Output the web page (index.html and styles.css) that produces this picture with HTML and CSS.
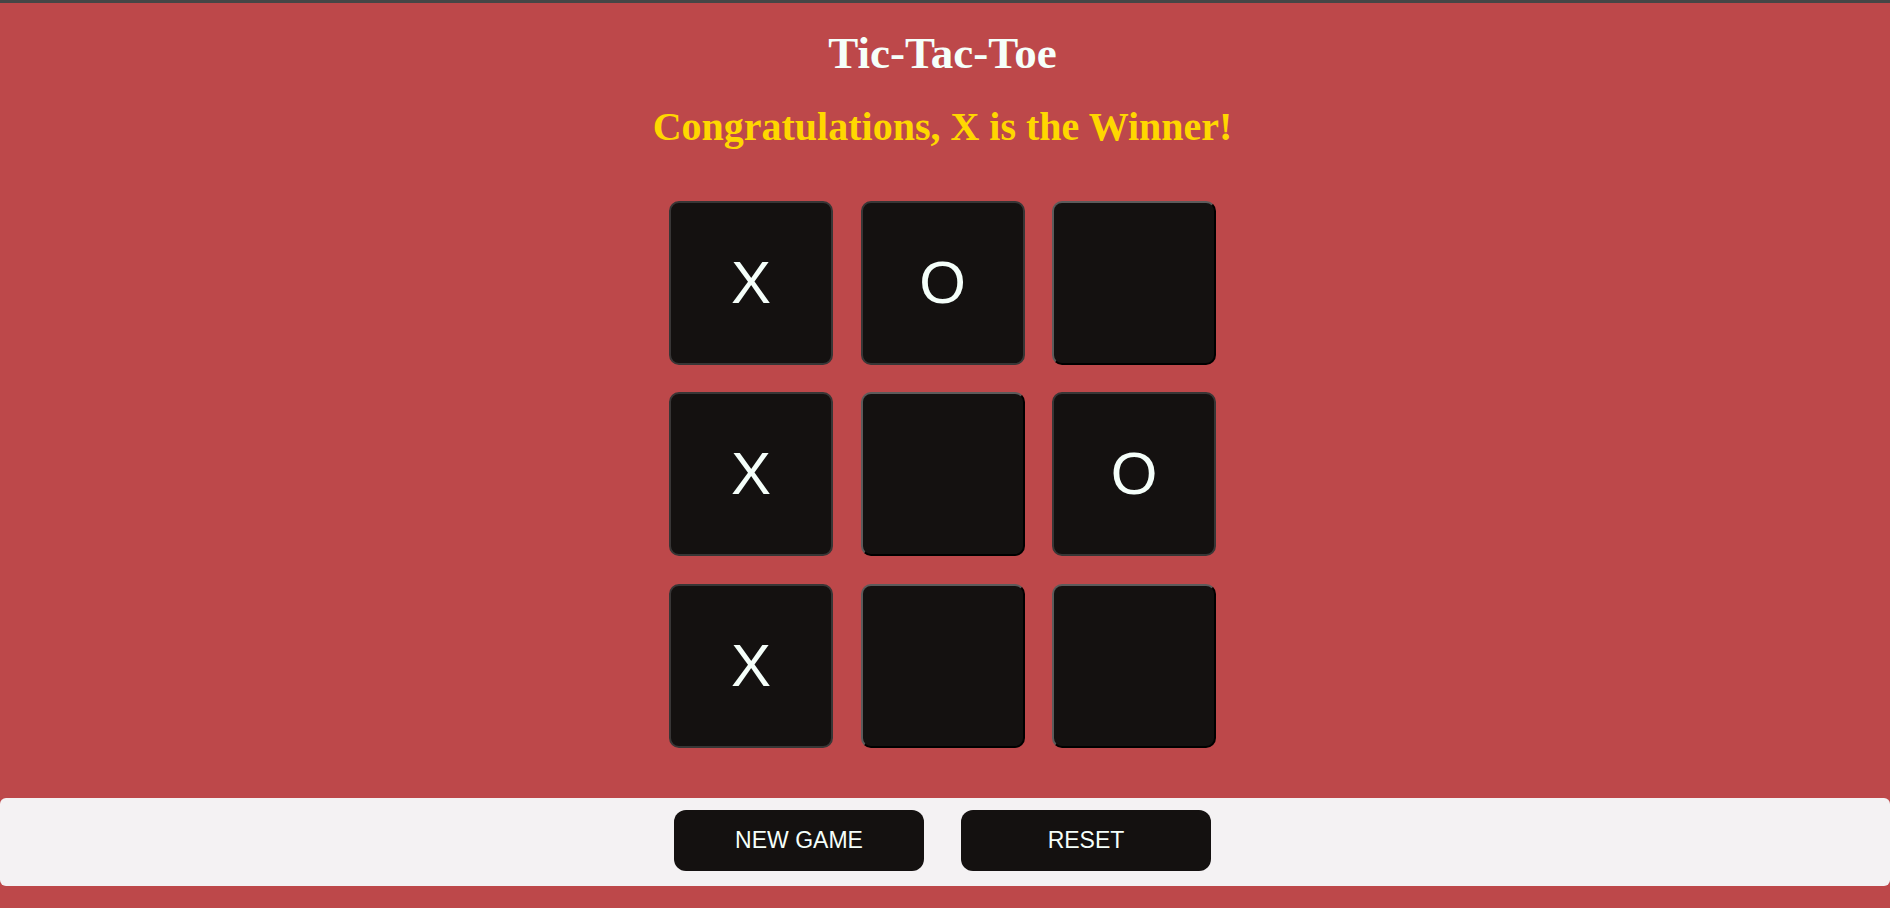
FILE: index.html
```html
<!DOCTYPE html>
<html lang="en">
<head>
<meta charset="utf-8">
<title>Tic-Tac-Toe</title>
<link rel="stylesheet" href="styles.css">
</head>
<body>
<div class="topbar"></div>
<main class="page">
  <h1 class="title">Tic-Tac-Toe</h1>
  <h2 class="status">Congratulations, X is the Winner!</h2>
  <div class="board">
    <div class="cell filled">X</div>
    <div class="cell filled">O</div>
    <div class="cell empty"></div>
    <div class="cell filled">X</div>
    <div class="cell empty"></div>
    <div class="cell filled">O</div>
    <div class="cell filled">X</div>
    <div class="cell empty"></div>
    <div class="cell empty"></div>
  </div>
</main>
<footer class="controls">
  <button class="btn">NEW GAME</button>
  <button class="btn">RESET</button>
</footer>
</body>
</html>
```

FILE: styles.css
```css
html, body {
  margin: 0;
  padding: 0;
}
body {
  background: #bd484a;
  height: 908px;
  overflow: hidden;
  font-family: "Liberation Serif", "Times New Roman", serif;
}
.topbar {
  height: 3px;
  background: #464646;
}
.page {
  display: flex;
  flex-direction: column;
  align-items: center;
  padding-right: 5px;
}
.title {
  margin: 28.3px 0 0;
  font-size: 45px;
  line-height: 1;
  font-weight: bold;
  color: #f5fffa;
}
.status {
  margin: 31.2px 0 0;
  font-size: 40px;
  line-height: 1;
  font-weight: bold;
  color: #ffd700;
}
.board {
  margin-top: 53.5px;
  display: grid;
  grid-template-columns: repeat(3, 164px);
  grid-template-rows: repeat(3, 164px);
  gap: 27.5px;
}
.cell {
  box-sizing: border-box;
  background: #141110;
  border-radius: 10px;
  border: 2px solid #383636;
  display: flex;
  align-items: center;
  justify-content: center;
  font-family: "Liberation Sans", Arial, sans-serif;
  font-size: 60px;
  line-height: 1;
  color: #f5fffa;
}
.cell.empty {
  border-top-color: #5c5b5b;
  border-left-color: #5c5b5b;
  border-right-color: #000;
  border-bottom-color: #000;
}
.controls {
  box-sizing: border-box;
  margin-top: 50px;
  height: 88px;
  background: #f4f2f3;
  border-radius: 6px;
  display: flex;
  align-items: flex-start;
  justify-content: center;
  gap: 37px;
  padding: 12px 5px 0 0;
}
.btn {
  width: 250px;
  height: 61px;
  border: none;
  border-radius: 12px;
  background: #141110;
  color: #f5fffa;
  font-family: "Liberation Sans", Arial, sans-serif;
  font-size: 23px;
  padding: 0;
}
```
